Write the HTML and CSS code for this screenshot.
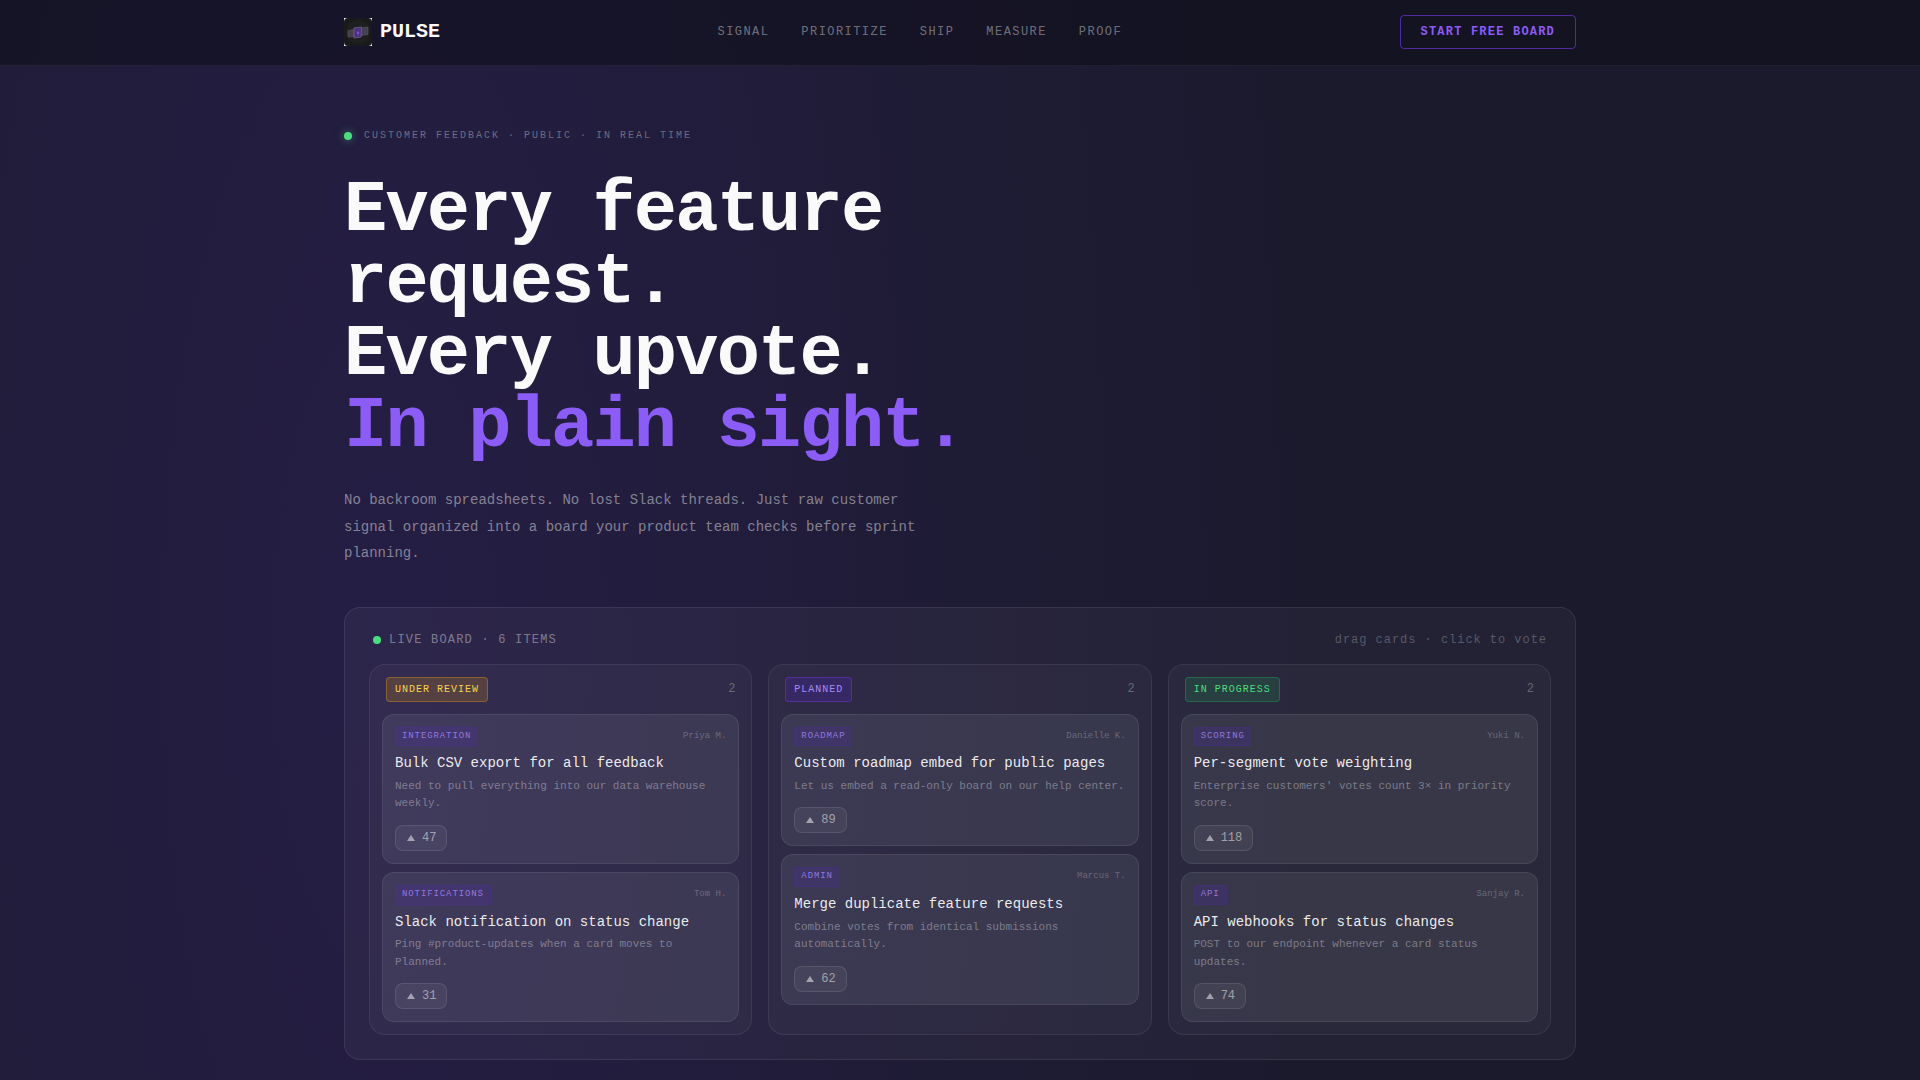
FILE: index.html
```html
<!DOCTYPE html>
<html lang="en">

<head>
    <meta charset="UTF-8">
    <meta name="viewport" content="width=device-width, initial-scale=1.0">
    <title>Pulse</title>
    <link rel="stylesheet" href="styles.css">
</head>

<body>

    <header class="topbar">
        <div class="container topbar-inner">
            <a class="brand" href="#">
                <svg class="brand-logo" viewBox="0 0 28 28" aria-hidden="true">
                    <rect width="28" height="28" fill="#f4f4f4"/>
                    <rect width="28" height="28" rx="4" fill="#191a1c"/>
                    <circle cx="14" cy="14" r="12" fill="#1e1f1e"/>
                    <path d="M4 12.500l6-1v7l-6 .5z" fill="#463f4b" stroke="#5d5464" stroke-width=".6"/>
                    <path d="M17 10l7-1v7.500l-7 1z" fill="#444152" stroke="#5a5568" stroke-width=".6"/>
                    <path d="M10 10l7.500-1-.5 10-7 1z" fill="#4b2f80" stroke="#6f6385" stroke-width=".8"/>
                    <path d="M14.500 12l-2 3.500h1.500l-.5 2.500 2-3.500h-1.500z" fill="#8b5cf6"/>
                </svg>
                <span class="brand-name">PULSE</span>
            </a>
            <nav class="links">
                <a href="#signal">SIGNAL</a>
                <a href="#prioritize">PRIORITIZE</a>
                <a href="#ship">SHIP</a>
                <a href="#measure">MEASURE</a>
                <a href="#proof">PROOF</a>
            </nav>
            <button type="button" class="cta">START FREE BOARD</button>
        </div>
    </header>

    <main class="container hero">
        <p class="eyebrow"><span class="dot dot-glow"></span>CUSTOMER FEEDBACK · PUBLIC · IN REAL TIME</p>
        <h1>Every feature request.<br>Every upvote.<br><span class="accent">In plain sight.</span></h1>
        <p class="lead">No backroom spreadsheets. No lost Slack threads. Just raw customer signal organized into a board your product team checks before sprint planning.</p>

        <section class="board">
            <div class="board-head">
                <span class="board-title"><span class="dot"></span>LIVE BOARD · 6 ITEMS</span>
                <span class="board-hint">drag cards · click to vote</span>
            </div>

            <div class="columns">
                <div class="column">
                    <div class="column-head">
                        <span class="status review">UNDER REVIEW</span>
                        <span class="count">2</span>
                    </div>
                    <article class="card">
                        <div class="card-top"><span class="tag">INTEGRATION</span><span class="author">Priya M.</span></div>
                        <h2>Bulk CSV export for all feedback</h2>
                        <p>Need to pull everything into our data warehouse weekly.</p>
                        <button type="button" class="vote"><svg viewBox="0 0 10 10"><path d="M5 2l4 6H1z"/></svg>47</button>
                    </article>
                    <article class="card">
                        <div class="card-top"><span class="tag">NOTIFICATIONS</span><span class="author">Tom H.</span></div>
                        <h2>Slack notification on status change</h2>
                        <p>Ping #product-updates when a card moves to Planned.</p>
                        <button type="button" class="vote"><svg viewBox="0 0 10 10"><path d="M5 2l4 6H1z"/></svg>31</button>
                    </article>
                </div>

                <div class="column">
                    <div class="column-head">
                        <span class="status planned">PLANNED</span>
                        <span class="count">2</span>
                    </div>
                    <article class="card">
                        <div class="card-top"><span class="tag">ROADMAP</span><span class="author">Danielle K.</span></div>
                        <h2>Custom roadmap embed for public pages</h2>
                        <p>Let us embed a read-only board on our help center.</p>
                        <button type="button" class="vote"><svg viewBox="0 0 10 10"><path d="M5 2l4 6H1z"/></svg>89</button>
                    </article>
                    <article class="card">
                        <div class="card-top"><span class="tag">ADMIN</span><span class="author">Marcus T.</span></div>
                        <h2>Merge duplicate feature requests</h2>
                        <p>Combine votes from identical submissions automatically.</p>
                        <button type="button" class="vote"><svg viewBox="0 0 10 10"><path d="M5 2l4 6H1z"/></svg>62</button>
                    </article>
                </div>

                <div class="column">
                    <div class="column-head">
                        <span class="status progress">IN PROGRESS</span>
                        <span class="count">2</span>
                    </div>
                    <article class="card">
                        <div class="card-top"><span class="tag">SCORING</span><span class="author">Yuki N.</span></div>
                        <h2>Per-segment vote weighting</h2>
                        <p>Enterprise customers' votes count 3× in priority score.</p>
                        <button type="button" class="vote"><svg viewBox="0 0 10 10"><path d="M5 2l4 6H1z"/></svg>118</button>
                    </article>
                    <article class="card">
                        <div class="card-top"><span class="tag">API</span><span class="author">Sanjay R.</span></div>
                        <h2>API webhooks for status changes</h2>
                        <p>POST to our endpoint whenever a card status updates.</p>
                        <button type="button" class="vote"><svg viewBox="0 0 10 10"><path d="M5 2l4 6H1z"/></svg>74</button>
                    </article>
                </div>
            </div>
        </section>
    </main>

</body>
</html>
```
FILE: styles.css
```css
* {
    box-sizing: border-box;
    margin: 0;
    padding: 0;
}

body {
    min-height: 100vh;
    font-family: "Liberation Mono", "Courier New", monospace;
    line-height: 1.5;
    color: #fafafa;
    background: radial-gradient(ellipse 48% 250% at 20% 60%, rgba(110, 58, 237, 0.12), transparent) fixed, #1b1a2d;
}

a {
    color: inherit;
    text-decoration: none;
}

button {
    font-family: inherit;
    font-size: 12px;
    line-height: 16px;
    cursor: pointer;
}

.container {
    max-width: 1280px;
    margin: 0 auto;
    padding: 0 24px;
}

/* top bar */
.topbar {
    position: sticky;
    top: 0;
    background: rgba(15, 15, 26, 0.6);
    border-bottom: 1px solid rgba(255, 255, 255, 0.06);
}

.topbar-inner {
    display: flex;
    align-items: center;
    justify-content: space-between;
    padding-top: 15px;
    padding-bottom: 16px;
}

.brand {
    display: flex;
    align-items: center;
    gap: 8px;
}

.brand-logo {
    width: 28px;
    height: 28px;
}

.brand-name {
    font-size: 20px;
    line-height: 28px;
    font-weight: bold;
}

.links {
    display: flex;
    gap: 32px;
    font-size: 12px;
    line-height: 16px;
    letter-spacing: 0.12em;
    color: rgba(255, 255, 255, 0.4);
}

.cta {
    padding: 8px 20px;
    font-weight: bold;
    letter-spacing: 0.1em;
    color: #8b5cf6;
    background: transparent;
    border: 1px solid rgba(124, 58, 237, 0.6);
    border-radius: 4px;
}

/* hero */
.hero {
    padding-top: 62px;
}

.dot {
    width: 8px;
    height: 8px;
    border-radius: 50%;
    background: #4ade80;
}

.dot-glow {
    box-shadow: 0 0 8px rgba(74, 222, 128, 0.5);
}

.eyebrow {
    display: flex;
    align-items: center;
    gap: 12px;
    font-size: 10px;
    letter-spacing: 0.2em;
    color: rgba(255, 255, 255, 0.35);
}

h1 {
    max-width: 820px;
    margin-top: 32px;
    font-size: 72px;
    line-height: 1;
    letter-spacing: -0.025em;
}

.accent {
    color: #8b5cf6;
}

.lead {
    max-width: 600px;
    margin-top: 24px;
    font-size: 14px;
    line-height: 1.9;
    color: rgba(255, 255, 255, 0.45);
}

/* board */
.board {
    margin: 40px 0 64px;
    padding: 24px;
    background: rgba(255, 255, 255, 0.04);
    border: 1px solid rgba(255, 255, 255, 0.08);
    border-radius: 16px;
}

.board-head {
    display: flex;
    align-items: center;
    justify-content: space-between;
    padding: 0 4px;
    font-size: 12px;
    line-height: 16px;
}

.board-title {
    display: flex;
    align-items: center;
    gap: 8px;
    letter-spacing: 0.1em;
    color: rgba(255, 255, 255, 0.4);
}

.board-hint {
    letter-spacing: 0.08em;
    color: rgba(255, 255, 255, 0.25);
}

.columns {
    display: grid;
    grid-template-columns: repeat(3, 1fr);
    gap: 16px;
    margin-top: 16px;
}

.column {
    display: flex;
    flex-direction: column;
    gap: 8px;
    padding: 12px;
    background: rgba(255, 255, 255, 0.03);
    border: 1px solid rgba(255, 255, 255, 0.07);
    border-radius: 16px;
}

.column-head {
    display: flex;
    align-items: center;
    justify-content: space-between;
    padding: 0 4px 4px;
}

.status {
    padding: 4px 8px;
    font-size: 10px;
    letter-spacing: 0.1em;
    border: 1px solid;
    border-radius: 4px;
}

.review {
    color: #fcd34d;
    background: rgba(245, 158, 11, 0.18);
    border-color: rgba(245, 158, 11, 0.35);
}

.planned {
    color: #a78bfa;
    background: rgba(91, 33, 220, 0.2);
    border-color: rgba(124, 58, 237, 0.4);
}

.progress {
    color: #4ade80;
    background: rgba(34, 197, 94, 0.15);
    border-color: rgba(34, 197, 94, 0.3);
}

.count {
    font-size: 12px;
    line-height: 16px;
    color: rgba(255, 255, 255, 0.3);
}

/* cards */
.card {
    padding: 12px;
    background: rgba(240, 250, 255, 0.07);
    border: 1px solid rgba(255, 255, 255, 0.08);
    border-radius: 12px;
}

.card-top {
    display: flex;
    justify-content: space-between;
    align-items: center;
    font-size: 9px;
}

.tag {
    padding: 2px 6px;
    letter-spacing: 0.1em;
    color: rgba(167, 139, 250, 0.8);
    background: rgba(91, 33, 220, 0.15);
    border: 1px solid rgba(91, 33, 220, 0.15);
    border-radius: 2px;
}

.author {
    color: rgba(255, 255, 255, 0.25);
}

.card h2 {
    margin-top: 8px;
    font-size: 14px;
    font-weight: normal;
    line-height: 1.4;
    color: rgba(255, 255, 255, 0.92);
}

.card p {
    margin: 4px 0 12px;
    font-size: 11px;
    line-height: 1.6;
    color: rgba(255, 255, 255, 0.35);
}

.vote {
    display: flex;
    align-items: center;
    gap: 6px;
    padding: 4px 10px;
    color: rgba(255, 255, 255, 0.5);
    background: rgba(255, 255, 255, 0.05);
    border: 1px solid rgba(255, 255, 255, 0.1);
    border-radius: 8px;
}

.vote svg {
    width: 10px;
    height: 10px;
    fill: currentColor;
}
```
